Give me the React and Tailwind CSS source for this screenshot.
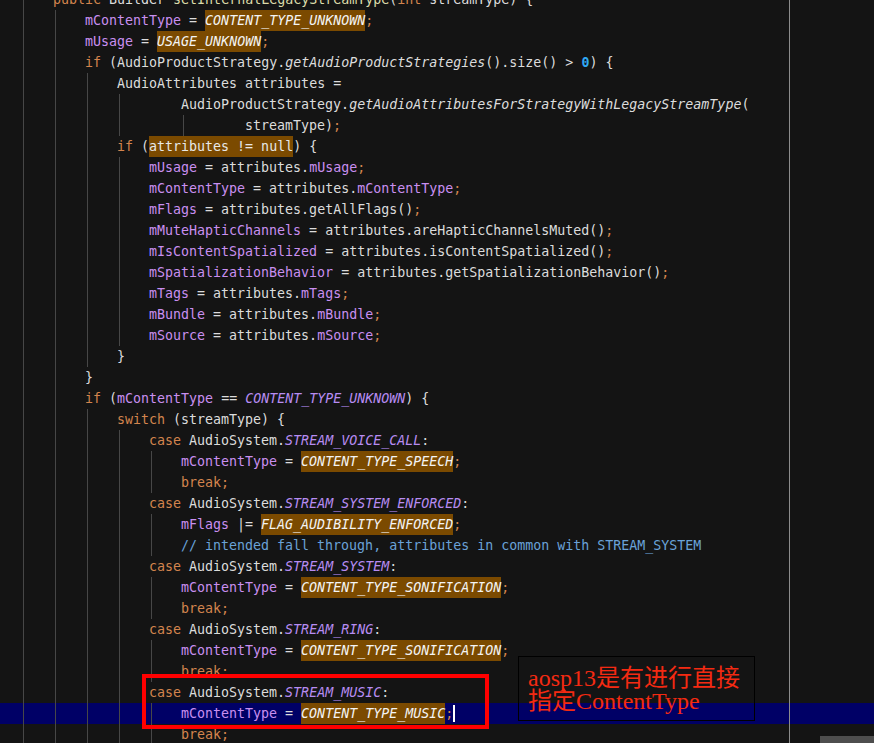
import React from 'react'

// token kinds -> classes
const K = {
  t: 'text-[#dcdcdc]',
  k: 'text-[#d3844e]',
  v: 'text-[#c98ff0]',
  c: 'text-[#b78cf2] italic',
  m: 'text-[#dcdcdc] italic',
  f: 'text-[#dcdcaa]',
  n: 'text-[#2fa8f2] font-bold',
  p: 'text-[#d3844e]',
  cm: 'text-[#6aa2d8]',
  h: 'text-[#e8e8e8] bg-[#7b4a00]',
  hc: 'text-[#f4f4f4] italic bg-[#7b4a00]',
}

const field = (name, rhs) => [['v', name], ['t', ' = attributes.'], ['v', rhs], ['p', ';']]
const call = (name, rhs) => [['v', name], ['t', ` = attributes.${rhs}()`], ['p', ';']]
const kase = (c) => [['k', 'case '], ['t', 'AudioSystem.'], ['c', c], ['t', ':']]
const assign = (name, op, c) => [['v', name], ['t', ` ${op} `], ['hc', c], ['p', ';']]
const brk = [['k', 'break'], ['p', ';']]

const LINES = [
  { ind: 1, toks: [['k', 'public '], ['t', 'Builder '], ['f', 'setInternalLegacyStreamType'], ['t', '('], ['k', 'int '], ['t', 'streamType) {']] },
  { ind: 2, toks: assign('mContentType', '=', 'CONTENT_TYPE_UNKNOWN') },
  { ind: 2, toks: assign('mUsage', '=', 'USAGE_UNKNOWN') },
  { ind: 2, toks: [['k', 'if '], ['t', '(AudioProductStrategy.'], ['m', 'getAudioProductStrategies'], ['t', '().size() > '], ['n', '0'], ['t', ') {']] },
  { ind: 3, toks: [['t', 'AudioAttributes attributes =']] },
  { ind: 5, g: [0, 1, 2, 3], toks: [['t', 'AudioProductStrategy.'], ['m', 'getAudioAttributesForStrategyWithLegacyStreamType'], ['t', '(']] },
  { ind: 7, g: [0, 1, 2, 3, 5], toks: [['t', 'streamType)'], ['p', ';']] },
  { ind: 3, toks: [['k', 'if '], ['t', '('], ['h', 'attributes != null'], ['t', ') {']] },
  { ind: 4, toks: field('mUsage', 'mUsage') },
  { ind: 4, toks: field('mContentType', 'mContentType') },
  { ind: 4, toks: call('mFlags', 'getAllFlags') },
  { ind: 4, toks: call('mMuteHapticChannels', 'areHapticChannelsMuted') },
  { ind: 4, toks: call('mIsContentSpatialized', 'isContentSpatialized') },
  { ind: 4, toks: call('mSpatializationBehavior', 'getSpatializationBehavior') },
  { ind: 4, toks: field('mTags', 'mTags') },
  { ind: 4, toks: field('mBundle', 'mBundle') },
  { ind: 4, toks: field('mSource', 'mSource') },
  { ind: 3, toks: [['t', '}']] },
  { ind: 2, toks: [['t', '}']] },
  { ind: 2, toks: [['k', 'if '], ['t', '('], ['v', 'mContentType'], ['t', ' == '], ['c', 'CONTENT_TYPE_UNKNOWN'], ['t', ') {']] },
  { ind: 3, toks: [['k', 'switch '], ['t', '(streamType) {']] },
  { ind: 4, toks: kase('STREAM_VOICE_CALL') },
  { ind: 5, toks: assign('mContentType', '=', 'CONTENT_TYPE_SPEECH') },
  { ind: 5, toks: brk },
  { ind: 4, toks: kase('STREAM_SYSTEM_ENFORCED') },
  { ind: 5, toks: assign('mFlags', '|=', 'FLAG_AUDIBILITY_ENFORCED') },
  { ind: 5, toks: [['cm', '// intended fall through, attributes in common with STREAM_SYSTEM']] },
  { ind: 4, toks: kase('STREAM_SYSTEM') },
  { ind: 5, toks: assign('mContentType', '=', 'CONTENT_TYPE_SONIFICATION') },
  { ind: 5, toks: brk },
  { ind: 4, toks: kase('STREAM_RING') },
  { ind: 5, toks: assign('mContentType', '=', 'CONTENT_TYPE_SONIFICATION') },
  { ind: 5, toks: brk },
  { ind: 4, toks: kase('STREAM_MUSIC') },
  { ind: 5, active: true, toks: assign('mContentType', '=', 'CONTENT_TYPE_MUSIC') },
  { ind: 5, toks: brk },
]

function Line({ line }) {
  const guides = line.g || Array.from({ length: line.ind }, (_, i) => i)
  return (
    <div className={`flex h-[21px] whitespace-pre leading-[21px] ${line.active ? 'bg-[#000066]' : ''}`}>
      <span className="w-[21px] shrink-0" />
      {Array.from({ length: line.ind }, (_, i) => (
        <span key={i} className="flex w-[32px] shrink-0">
          {guides.includes(i) && <span className="ml-[2px] w-px bg-[#474747]" />}
        </span>
      ))}
      {line.toks.map(([kind, text], i) => (
        <span key={i} className={K[kind]}>{text}</span>
      ))}
      {line.active && <span className="my-[2px] w-[2px] bg-white" />}
    </div>
  )
}

export default function App() {
  return (
    <div className="relative h-[743px] w-[874px] overflow-hidden bg-[#141414] font-['DejaVu_Sans_Mono',monospace] text-[13.3px]">
      <div className="-mt-[11px]">
        {LINES.map((line, i) => (
          <Line key={i} line={line} />
        ))}
      </div>

      {/* ruler */}
      <div className="absolute left-[789px] top-0 h-full w-px bg-[#8c8c8c]" />
      {/* scrollbar thumb */}
      <div className="absolute left-[820px] top-[736px] h-[7px] w-[54px] bg-[#4e4e4e]" />

      {/* annotation: red box around the case */}
      <div className="absolute left-[142px] top-[674px] h-[55px] w-[347px] border-4 border-[#ff0000]" />

      {/* annotation note */}
      <div className="absolute left-[518px] top-[656px] h-[65px] w-[237px] border border-black pl-[9px] pt-[10px] font-['Liberation_Serif','Noto_Sans_CJK_SC',serif] text-[24px] leading-[23px] text-[#f42a12]">
        <div>aosp13是有进行直接</div>
        <div>指定ContentType</div>
      </div>
    </div>
  )
}
